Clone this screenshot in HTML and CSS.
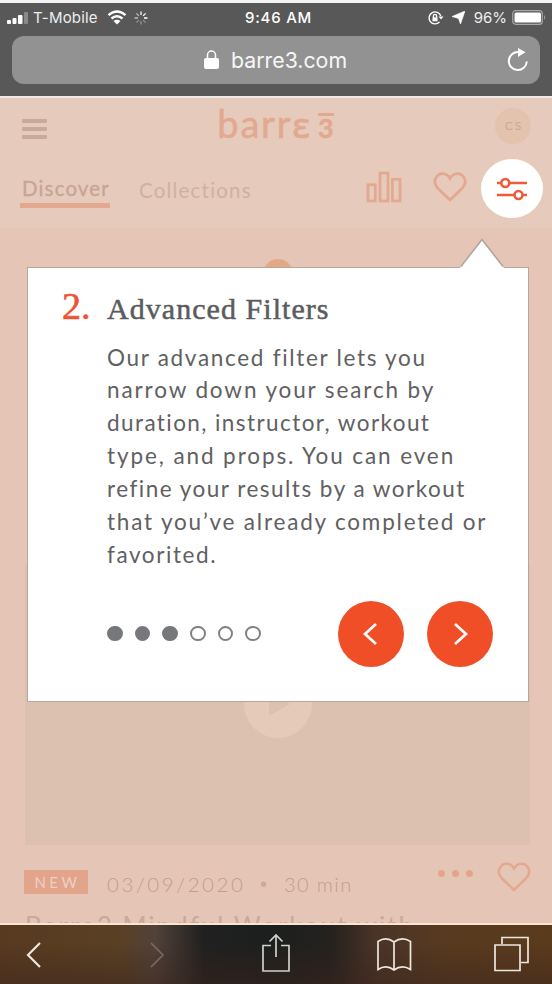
FILE: index.html
```html
<!DOCTYPE html>
<html lang="en">
<head>
<meta charset="utf-8">
<title>barre3.com</title>
<link rel="stylesheet" href="styles.css">
</head>
<body>
<header class="browser-top">
  <div class="status">
    <div class="status-left">
      <svg width="21" height="12" viewBox="0 0 21 12" fill="#fff"><rect x="0" y="8" width="4" height="4" rx="1"/><rect x="5.500" y="6" width="4" height="6" rx="1"/><rect x="11" y="3" width="4.500" height="9" rx="1"/><rect x="17" y="0" width="4" height="12" rx="1" opacity=".3"/></svg>
      <span class="carrier">T-Mobile</span>
      <svg class="wifi" width="20" height="15" viewBox="0 0 20 15" fill="none" stroke="#fff" stroke-width="2.400"><path d="M1.500 5.200Q10-2 18.500 5.200M4.500 8.500Q10 4 15.500 8.500"/><path d="M6.500 11Q10 8.300 13.500 11L10 14.500Z" fill="#fff" stroke="none"/></svg>
      <svg class="spinner" width="14" height="14" viewBox="-7 -7 14 14" stroke="#fff" stroke-width="1.300"><path d="M0-3V-6.500M2.100-2.100L4.600-4.600M3 0H6.500" /><path d="M2.100 2.100L4.600 4.600M0 3V6.500M-2.100 2.100L-4.600 4.600" opacity=".35"/><path d="M-3 0H-6.500M-2.100-2.100L-4.600-4.600" opacity=".6"/></svg>
    </div>
    <span class="clock">9:46 AM</span>
    <div class="status-right">
      <svg width="16" height="14" viewBox="0 0 16 14" fill="none" stroke="#fff" stroke-width="1.400"><path d="M12.800 5A6 6 0 1 0 11.500 11"/><path d="M10.500 5.500H15.500L13 8.500Z" fill="#fff" stroke="none"/><rect x="4.500" y="6.300" width="5" height="4" fill="#fff" stroke="none"/><path d="M5.400 6.500V5a1.600 1.600 0 0 1 3.200 0V6.500"/></svg>
      <svg class="arrow" width="13" height="13" viewBox="0 0 13 13" fill="#fff"><path d="M13 0L8.500 13L6.500 7.500L0 5.500Z" stroke="#fff" stroke-width=".6"/></svg>
      <span class="percent">96%</span>
      <svg width="34" height="15" viewBox="0 0 34 15"><rect x=".7" y=".7" width="29.600" height="13.600" rx="3" fill="none" stroke="#a8a8a8" stroke-width="1.200"/><rect x="2.500" y="2.500" width="26.500" height="10" rx="1.500" fill="#fff"/><path d="M32 5q2.500 2.500 0 5z" fill="#999"/></svg>
    </div>
  </div>
  <div class="address">
    <svg class="lock" width="15" height="19" viewBox="0 0 15 19"><rect x="0" y="8" width="15" height="11" rx="2" fill="#fff"/><path d="M3.500 9V5a4 4 0 0 1 8 0V9" fill="none" stroke="#fff" stroke-width="1.500"/></svg>
    <span class="host">barre3.com</span>
    <svg class="reload" width="22" height="24" viewBox="0 0 22 24"><path d="M12 4.200A9 9 0 1 0 19.800 13.500" fill="none" stroke="#fff" stroke-width="2"/><path d="M11 0L18.500 4.300L11 9Z" fill="#fff"/></svg>
  </div>
</header>

<main class="page">
  <section class="masthead">
    <div class="brand-row">
      <div class="menu"><i></i><i></i><i></i></div>
      <div class="logo"><span class="logo-main">barr</span><span class="logo-e">ɛ</span><span class="logo-three">3</span></div>
      <div class="avatar">CS</div>
    </div>
    <nav class="tabs">
      <a class="tab active">Discover</a>
      <a class="tab second">Collections</a>
      <svg class="chart" width="36" height="32" viewBox="0 0 36 32" fill="none" stroke="#e3a890" stroke-width="2.700"><rect x="2" y="13.700" width="7.300" height="16.300"/><rect x="14" y="2" width="8" height="28"/><rect x="26.400" y="8.300" width="7.600" height="21.700"/></svg>
      <svg class="heart" width="34" height="30" viewBox="0 0 34 30" fill="none" stroke="#e3a890" stroke-width="2.700"><path d="M17 28L4.300 15.700C-1.500 9 4 1.500 10 1.700C14 1.800 15.500 4 17 6.500C18.500 4 20 1.800 24 1.700C30 1.500 35.500 9 29.700 15.700Z"/></svg>
      <div class="filter">
        <svg width="32" height="24" viewBox="0 0 32 24" fill="#fff" stroke="#ec5c3a" stroke-width="2.600"><path d="M1 6H31M1 18H31"/><circle cx="9.300" cy="6" r="4"/><circle cx="22.500" cy="18" r="4"/></svg>
      </div>
    </nav>
  </section>

  <section class="feed">
    <div class="badge"></div>
    <div class="video">
      <div class="play"><svg width="24" height="24" viewBox="0 0 24 24"><path d="M3 0L24 12L3 24Z" fill="#dcc0b0"/></svg></div>
    </div>
    <div class="meta">
      <span class="new">NEW</span>
      <span class="date">03/09/2020</span><span class="bullet">•</span><span class="mins">30 min</span>
      <span class="more"><i></i><i></i><i></i></span>
      <svg class="heart-low" width="34" height="30" viewBox="0 0 34 30" fill="none" stroke="#e3a890" stroke-width="2.600"><path d="M17 28L4.300 15.700C-1.500 9 4 1.500 10 1.700C14 1.800 15.500 4 17 6.500C18.500 4 20 1.800 24 1.700C30 1.500 35.500 9 29.700 15.700Z"/></svg>
    </div>
    <h2 class="class-title">Barre3 Mindful Workout with</h2>
  </section>

  <aside class="popover">
    <svg class="tip" width="44" height="30" viewBox="0 0 44 30"><path d="M0 30L1 28.500L22 1.500L43 28.500L44 30Z" fill="#fff"/><path d="M1 28.500L22 1.500L43 28.500" fill="none" stroke="#b0a39c" stroke-width="1.500"/></svg>
    <div class="heading"><span class="step">2.</span><h1>Advanced Filters</h1></div>
    <p class="copy">
      <span class="l1">Our advanced filter lets you</span>
      <span class="l2">narrow down your search by</span>
      <span class="l3">duration, instructor, workout</span>
      <span class="l4">type, and props. You can even</span>
      <span class="l5">refine your results by a workout</span>
      <span class="l6">that you’ve already completed or</span>
      <span class="l7">favorited.</span>
    </p>
    <div class="controls">
      <div class="dots"><i class="on"></i><i class="on"></i><i class="on"></i><i></i><i></i><i></i></div>
      <button class="round" aria-label="Previous"><svg width="66" height="66" viewBox="0 0 66 66" fill="none" stroke="#fff" stroke-width="2.700"><path d="M38 23L27 33L38 43"/></svg></button>
      <button class="round" aria-label="Next"><svg width="66" height="66" viewBox="0 0 66 66" fill="none" stroke="#fff" stroke-width="2.700"><path d="M28 23L39 33L28 43"/></svg></button>
    </div>
  </aside>
</main>

<footer class="browser-bottom">
  <svg width="552" height="58" viewBox="0 1 552 58" fill="none" stroke="#eee7e0" stroke-width="1.700">
    <path d="M40 19L28 31L40 43" stroke-width="2.200"/>
    <path d="M151 19L163 31L151 43" stroke="#7e6c61" stroke-width="1.500"/>
    <g stroke="#cfcfcc"><path d="M271 21.500H263V47H289V21.500H281M276 33V12M269.500 17.500L276 11L282.500 17.500"/></g>
    <path d="M394 18Q386 12 378 17.500V45.500Q386 40 394 46Q402 40 410.500 45.500V17.500Q402 12 394 18V46"/>
    <path d="M502 20V13.500H528V38.500H521M495 21H520V46.500H495Z"/>
  </svg>
</footer>
</body>
</html>
```
FILE: styles.css
```css
* { box-sizing: border-box; }
body {
  margin: 0;
  width: 552px;
  height: 984px;
  overflow: hidden;
  display: flex;
  flex-direction: column;
  font-family: Lato, sans-serif;
}
svg { display: block; flex: none; }
span, a { white-space: nowrap; }

.browser-top {
  height: 98px;
  background: #585858;
  border-top: 3px solid #f3f3f3;
  border-bottom: 2px solid #efe9e6;
  color: #fff;
  font-family: Inter, sans-serif;
}
.status {
  height: 33px;
  padding: 0 6px 4px 7px;
  display: grid;
  grid-template-columns: 1fr auto 1fr;
  align-items: center;
  font-size: 15px;
}
.status-left, .status-right { display: flex; align-items: center; }
.status-right { justify-content: flex-end; }
.carrier { margin-left: 5px; color: #eee; letter-spacing: .2px; }
.wifi { margin-left: 9px; }
.spinner { margin-left: 7px; }
.clock { font-weight: 500; font-size: 15px; letter-spacing: .8px; padding-left: 4px; }
.arrow { margin-left: 8px; }
.percent { margin: 0 5px 0 9px; color: #eee; }
.address {
  margin: 0 12px;
  height: 48px;
  border-radius: 12px;
  background: #929292;
  display: flex;
  align-items: center;
  padding: 0 11px 0 192px;
}
.lock { margin-top: -2px; }
.host { margin-left: 12px; font-size: 21.300px; color: #f7f7f7; }
.reload { margin-left: auto; }

.page {
  position: relative;
  height: 825px;
  overflow: hidden;
  background: #e5c6b6;
}
.masthead { height: 130px; background: #e6cabb; }
.brand-row {
  height: 56px;
  padding: 0 21px 0 22px;
  display: flex;
  justify-content: space-between;
  align-items: center;
}
.menu { width: 25px; display: grid; gap: 4px; padding-top: 5px; }
.menu i { height: 4px; border-radius: 1px; background: #c9a999; }
.logo {
  display: flex;
  align-items: baseline;
  margin: -6px 0 0 9px;
  color: #e3a890;
  font-size: 38px;
  line-height: 54px;
  -webkit-text-stroke: .5px;
}
.logo-main { letter-spacing: 1.800px; }
.logo-e { font-family: "Noto Sans", sans-serif; font-size: 35px; font-weight: 500; line-height: 1; }
.logo-three {
  margin-left: 8px;
  font-size: 27px;
  font-weight: 700;
  line-height: 21px;
  border-top: 3px solid #e3a890;
  padding-top: 1px;
}
.avatar {
  width: 36px;
  height: 36px;
  border-radius: 50%;
  background: #e3c3ae;
  color: #caa995;
  font-size: 12px;
  letter-spacing: 2px;
  text-indent: 2px;
  line-height: 36px;
  text-align: center;
}
.tabs { display: flex; height: 66px; padding: 0 9px 0 20px; align-items: flex-start; }
.tab { font-size: 20.500px; color: #d1b0a0; line-height: 24px; }
.active {
  width: 90px;
  height: 54px;
  padding: 22px 0 0 2px;
  border-bottom: 5px solid #e3a890;
  color: #c6a595;
  letter-spacing: 1.150px;
  -webkit-text-stroke: .3px;
}
.second { padding-top: 24px; margin-left: 29px; width: 115px; letter-spacing: 1.200px; }
.chart { margin: 17px 0 0 112px; }
.heart { margin: 18px 0 0 31px; }
.filter {
  width: 62px;
  height: 59px;
  margin: 5px 0 0 auto;
  border-radius: 50%;
  background: #fff;
  display: flex;
  align-items: center;
  justify-content: center;
}

.badge { width: 30px; height: 30px; margin: 31px 0 0 263px; border-radius: 50%; background: #e4a884; }
.video {
  margin: 275px 22px 0 25px;
  height: 281px;
  padding-top: 106px;
  background: #dcc0b0;
}
.play {
  width: 68px;
  height: 68px;
  margin: 0 auto;
  border-radius: 50%;
  background: #e5c9b9;
  display: flex;
  align-items: center;
  justify-content: center;
}
.meta {
  height: 65px;
  padding: 0 21px 0 24px;
  display: flex;
  align-items: flex-start;
  font-size: 20px;
  line-height: 24px;
  color: #ccaa9a;
}
.new {
  width: 64px;
  height: 24px;
  margin-top: 25px;
  background: #e3a48c;
  color: #edd0c2;
  font-size: 15px;
  letter-spacing: 3.500px;
  text-indent: 3px;
  text-align: center;
}
.date { margin: 27px 0 0 19px; width: 138px; font-weight: 300; font-size: 20.500px; letter-spacing: 2.550px; color: #c19d8d; }
.bullet { margin: 27px 0 0 15px; width: 24px; font-family: "Liberation Sans", sans-serif; }
.mins { margin-top: 27px; letter-spacing: 1.400px; width: 68px; font-weight: 300; color: #c19d8d; }
.more { display: flex; gap: 7px; margin: 25px 0 0 86px; }
.more i { width: 7px; height: 7px; border-radius: 50%; background: #e3a48c; }
.heart-low { margin: 17px 0 0 auto; }
.class-title {
  margin: 0 0 0 25px;
  font-size: 26px;
  font-weight: 400;
  line-height: 32px;
  letter-spacing: 2px;
  white-space: nowrap;
  color: #c9a999;
}

.popover {
  position: absolute;
  left: 27px;
  top: 169px;
  width: 502px;
  height: 435px;
  border: 1.500px solid #b5a69e;
  background: #fff;
  color: #606062;
  padding: 18px 34px 0 34px;
}
.tip { position: absolute; left: 432px; top: -30px; }
.heading {
  display: grid;
  grid-template-columns: 45px auto;
  align-items: baseline;
  font-family: "Liberation Serif", serif;
  line-height: 40px;
}
.step { font-size: 38px; color: #ec5433; -webkit-text-stroke: .6px; }
h1 { margin: 0; font-size: 30px; font-weight: 400; letter-spacing: 1.050px; white-space: nowrap; color: #5b5b5d; -webkit-text-stroke: .5px; }
.copy { margin: 12.500px 0 0 45px; font-size: 22.500px; line-height: 32.900px; }
.copy span { display: block; letter-spacing: 1.800px; }
.copy .l1 { letter-spacing: 1.700px; }
.copy .l2 { letter-spacing: 1.880px; }
.copy .l3 { letter-spacing: 1.420px; }
.copy .l4 { letter-spacing: 1.900px; }
.copy .l5 { letter-spacing: 1.480px; }
.copy .l7 { letter-spacing: 1.600px; }
.controls { display: flex; align-items: center; margin-top: 29.500px; padding-left: 45px; }
.dots { display: flex; gap: 12px; margin: -2px 77px 0 0; }
.dots i { width: 15.700px; height: 15.700px; border: 2.500px solid #808184; border-radius: 50%; }
.dots .on { background: #77787b; border-color: #77787b; }
.round { width: 66px; height: 66px; padding: 0; margin-right: 23px; flex: none; border: 0; border-radius: 50%; background: #f04e26; }

.browser-bottom {
  height: 61px;
  border-top: 2px solid #fbe4d2;
  background:
    linear-gradient(transparent 30%, #3b241c80),
    linear-gradient(90deg, #583a20, #594024 22%, #51423a 28%, #202020 37%, #1c1f1e 49%, #24211e 60%, #4a3428 68%, #573a20 80%, #5a3b1c);
}
```
